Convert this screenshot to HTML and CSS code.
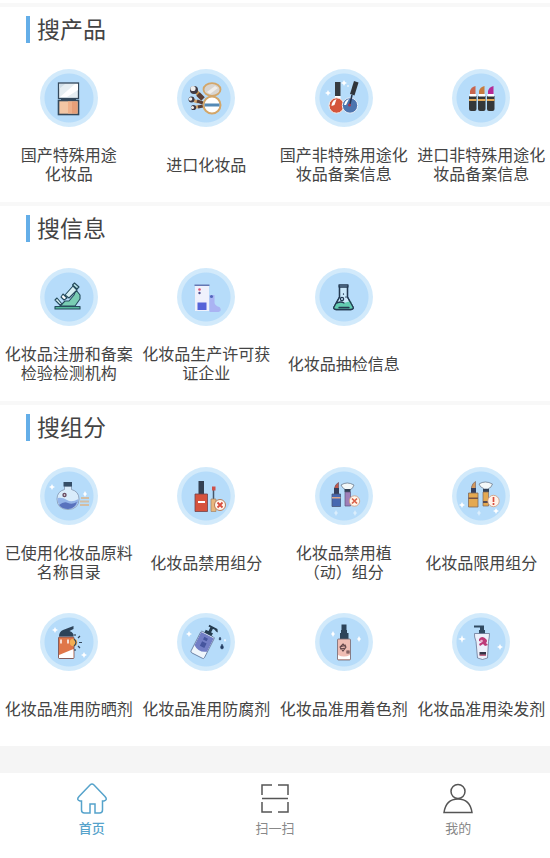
FILE: index.html
```html
<!DOCTYPE html>
<html lang="zh-CN">
<head>
    <meta charset="UTF-8">
    <meta name="viewport" content="width=device-width, initial-scale=1.0">
    <title>化妆品查询</title>
    <link rel="stylesheet" href="styles.css">
</head>

<body>
    <div class="wrap">
        <section class="panel">
            <h2>搜产品</h2>
            <ul>
                <li>
                    <a href="#">
                        <svg class="icon" viewBox="0 0 58 58">
                            <rect x="18.500" y="14" width="20" height="15.500" fill="#e6eef2" stroke="#34495c" stroke-width="1.300"/>
                            <path d="M20 28L35 15h3v6L27 28z" fill="#fff"/>
                            <path d="M19 20l6-5h-6z" fill="#cfdde6"/>
                            <rect x="21" y="29" width="15" height="3" fill="#34495c"/>
                            <rect x="18.500" y="31.500" width="20" height="14" fill="#f2c6a4" stroke="#34495c" stroke-width="1.600"/>
                            <path d="M28 32.500h4v12h-4z" fill="#eeb08a"/>
                            <path d="M32 32.500h5.500v12H32z" fill="#e79f78"/>
                        </svg>
                        <span class="name short">国产特殊用途化妆品</span>
                    </a>
                </li>
                <li>
                    <a href="#">
                        <svg class="icon" viewBox="0 0 58 58">
                            <path d="M18 21l5 6" stroke="#c9944f" stroke-width="4"/>
                            <path d="M21 25l5 5" stroke="#5b4037" stroke-width="5"/>
                            <path d="M15 31l6 2" stroke="#d3a36a" stroke-width="3"/>
                            <path d="M20 32l6 2" stroke="#5b4037" stroke-width="3"/>
                            <path d="M17 38.500l5-1" stroke="#d3a36a" stroke-width="3"/>
                            <path d="M21 38l5-1" stroke="#5b4037" stroke-width="3"/>
                            <circle cx="17" cy="21" r="4" fill="#3e3a44"/>
                            <circle cx="16" cy="19.500" r="2.600" fill="#eee"/>
                            <circle cx="14.500" cy="30.500" r="3" fill="#3e3a44"/>
                            <circle cx="13.500" cy="30" r="1.800" fill="#eee"/>
                            <circle cx="16.500" cy="38.500" r="2.600" fill="#3e3a44"/>
                            <circle cx="15.500" cy="38.500" r="1.500" fill="#eee"/>
                            <ellipse cx="35" cy="20.500" rx="8.500" ry="6.300" fill="#d9d5d0" stroke="#d3a669" stroke-width="1.800"/>
                            <path d="M30 23l8-6 3 2-8 6z" fill="#f0eeeb"/>
                            <circle cx="35" cy="36" r="8.500" fill="#fff" stroke="#d3a669" stroke-width="2"/>
                            <path d="M27.500 34.500h15v3h-15z" fill="#5489b5"/>
                        </svg>
                        <span class="name">进口化妆品</span>
                    </a>
                </li>
                <li>
                    <a href="#">
                        <svg class="icon" viewBox="0 0 58 58">
                            <path d="M20 13h5.500v14H20z" fill="#363b40"/>
                            <path d="M20 27h5.500v3H20z" fill="#fff"/>
                            <ellipse cx="21.500" cy="36.500" rx="7.500" ry="7.700" fill="#d4553c" stroke="#f4efed"/>
                            <path d="M16.500 37q0-5 5-7l-2 6z" fill="#fff"/>
                            <circle cx="35" cy="36.500" r="7.700" fill="#4c74ae" stroke="#e8eff8"/>
                            <path d="M29 36q1-5 5-6l-3 6z" fill="#fff"/>
                            <path d="M39 12l4.500 1.500-4 13-4.500-1.500z" fill="#30353a"/>
                            <path d="M37 26l-2 9" stroke="#26324a" stroke-width="1.500"/>
                            <circle cx="34.500" cy="36" r="1.500" fill="#a6354c"/>
                            <path class="star" d="M29 11l1 2 2 1-2 1-1 2-1-2-2-1 2-1zM13 21l1 2 2 1-2 1-1 2-1-2-2-1 2-1zM33 16l1 1-1 1-1-1z"/>
                        </svg>
                        <span class="name">国产非特殊用途化妆品备案信息</span>
                    </a>
                </li>
                <li>
                    <a href="#">
                        <svg class="icon" viewBox="0 0 58 58">
                            <g id="lipstick">
                                <path d="M17 31h7.500v9q0 2-2 2H19q-2 0-2-2z" fill="#343739"/>
                                <path d="M17 27h7.500v4H17z" fill="#343739"/>
                                <path d="M17 30h7.500v2H17z" fill="#e2a958"/>
                                <path d="M17.500 25h6.500v2.500h-6.500z" fill="#fff"/>
                            </g>
                            <use href="#lipstick" x="9"/>
                            <use href="#lipstick" x="18"/>
                            <path d="M18 25v-3q1-4 5.500-5v8z" fill="#c8654e"/>
                            <path d="M27 25v-3q1-4 5.500-5v8z" fill="#c77b3e"/>
                            <path d="M36 25v-3q1-4 5.500-5v8z" fill="#b52a96"/>
                        </svg>
                        <span class="name">进口非特殊用途化妆品备案信息</span>
                    </a>
                </li>
            </ul>
        </section>

        <section class="panel">
            <h2>搜信息</h2>
            <ul>
                <li>
                    <a href="#">
                        <svg class="icon" viewBox="0 0 58 58" stroke="#254b5c" stroke-width="1.100" stroke-linejoin="round" stroke-linecap="round">
                            <path d="M36 22l4 5v4l-5 7H20l5-5h4l5-6z" fill="#79cdb3"/>
                            <path d="M25 27l8-9 4 4-8 8z" fill="#d6f0f4"/>
                            <path d="M34.500 15l4.500 4-2 2-4.500-4z" fill="#b8e3e6"/>
                            <path d="M23 26l4 4-3 2-3-3z" fill="#fff"/>
                            <path d="M15 32l5 5 2-1-5-6z" fill="#d6f0f4"/>
                            <path d="M15 38.500h25v2.500H15z" fill="#55b79a"/>
                        </svg>
                        <span class="name">化妆品注册和备案检验检测机构</span>
                    </a>
                </li>
                <li>
                    <a href="#">
                        <svg class="icon" viewBox="0 0 58 58">
                            <path d="M18 17h14v26H18z" fill="#eff1fc"/>
                            <path d="M17.500 16.500h15V18h-15z" fill="#6478b4"/>
                            <circle cx="22.500" cy="21.500" r="1.300" fill="#df5374"/>
                            <circle cx="22.500" cy="25" r="1.200" fill="#4b4e91"/>
                            <path d="M20.500 34.500h9v7.500h-9z" fill="#5563d8"/>
                            <path d="M32.500 27h5v8q1 3 5 4 3 4-1 5h-9z" fill="#aab3f3"/>
                            <circle cx="34.500" cy="28.500" r="1.500" fill="#5366bb"/>
                        </svg>
                        <span class="name">化妆品生产许可获证企业</span>
                    </a>
                </li>
                <li>
                    <a href="#">
                        <svg class="icon" viewBox="0 0 58 58" fill="none" stroke="#233952" stroke-width="1.300" stroke-linejoin="round" stroke-linecap="round">
                            <path d="M24.500 19v10L19 39q-1 2 2 2.500h15q3-.5 2-2.500l-5.500-10V19" fill="#cae8fa"/>
                            <path d="M22 35q4-2 7 0 3-1 7-2l2 6q1 2-2 2.500H21q-3-.5-2-2.500z" fill="#62cbb1" stroke="none"/>
                            <path d="M24.500 19v10L19 39q-1 2 2 2.500h15q3-.5 2-2.500l-5.500-10V19M24 17h9v2h-9zM22 35q4-2 7 0M24 39.500h10"/>
                            <circle cx="27" cy="31" r="1.600"/>
                            <path d="M28.500 26v.2M31 29v.2"/>
                        </svg>
                        <span class="name">化妆品抽检信息</span>
                    </a>
                </li>
            </ul>
        </section>

        <section class="panel">
            <h2>搜组分</h2>
            <ul>
                <li>
                    <a href="#">
                        <svg class="icon" viewBox="0 0 58 58">
                            <path d="M24.500 19h7v3.500q7.500 2 7.500 9.500 0 10-11 10.500Q17 42 17 32q0-7.500 7.500-9.500z" fill="#d9ecfb" stroke="#788ba8" stroke-width=".7"/>
                            <path d="M17.500 31q5-1 9.500 2t11.500-1q0 9.500-10.500 10Q17 41 17.500 31z" fill="#94b4e8"/>
                            <path d="M19 38q5-4 9-2t9-1q-2 6.500-9 7-6 0-9-4z" fill="#5972bd"/>
                            <path d="M23.500 15h8.500v4.500h-8.500z" fill="#344e67"/>
                            <circle cx="24.500" cy="28" r="2.200" fill="#684c62"/>
                            <circle cx="24.500" cy="28" r=".8" fill="#fff"/>
                            <path d="M41 31h8M40 34.500h9M40 38h9" stroke="#d2bda3" stroke-width="2"/>
                            <path class="star" d="M12 17l1 2 2 1-2 1-1 2-1-2-2-1 2-1zM45 24l1 2 1 1-1 1-1 2-1-2-1-1 1-1z"/>
                        </svg>
                        <span class="name">已使用化妆品原料名称目录</span>
                    </a>
                </li>
                <li>
                    <a href="#">
                        <svg class="icon" viewBox="0 0 58 58">
                            <path d="M21.500 14h5.500v13h-5.500z" fill="#334053"/>
                            <path d="M18 27h12.500v17.500H18z" fill="#d6523d" stroke="#71434b" stroke-width=".8"/>
                            <path d="M21 34h7v2h-7z" fill="#fff"/>
                            <path d="M36.500 23v9" stroke="#44566b" stroke-width="1.500"/>
                            <path d="M35 19.500h3.500v4H35z" fill="#cd504a"/>
                            <path d="M34 32h5v12.500h-5z" fill="#e8b77d" stroke="#a28365" stroke-width=".7"/>
                            <circle cx="43" cy="38" r="5.500" fill="#fff7ed" stroke="#b77b58"/>
                            <path d="M40.500 35.500l5 5m0-5l-5 5" stroke="#d84d3f" stroke-width="1.800"/>
                        </svg>
                        <span class="name">化妆品禁用组分</span>
                    </a>
                </li>
                <li>
                    <a href="#">
                        <svg class="icon" viewBox="0 0 58 58">
                            <path d="M19.500 21q1-4 4-5.500V23h-4z" fill="#c3594b" stroke="#74515f" stroke-width=".7"/>
                            <path d="M19 21h5v6h-5z" fill="#343f5d"/>
                            <path d="M17 27h8.500v12.500H17z" fill="#4668b1" stroke="#475679" stroke-width=".8"/>
                            <path d="M17 30h8.500v1.500H17z" fill="#dca78c"/>
                            <path d="M26 18q6-4 13 0-1 4-4.500 5h-3.500q-4-2-5-5z" fill="#f3f8f9" stroke="#627083" stroke-width=".7"/>
                            <path d="M29.500 22h6v3h-6z" fill="#334257"/>
                            <path d="M30 25h5.500v14H30z" fill="#9f7eb8" stroke="#60577d" stroke-width=".7"/>
                            <circle cx="39.500" cy="34" r="5.200" fill="#fff7ed" stroke="#d19a7c" stroke-width=".8"/>
                            <path d="M37 31.500l5 5m0-5l-5 5" stroke="#d96149" stroke-width="1.700"/>
                            <path class="star faint" d="M21 43l1 2 1 1-1 1-1 2-1-2-1-1 1-1zM40 43l1 2 1 1-1 1-1 2-1-2-1-1 1-1z"/>
                        </svg>
                        <span class="name short">化妆品禁用植（动）组分</span>
                    </a>
                </li>
                <li>
                    <a href="#">
                        <svg class="icon" viewBox="0 0 58 58">
                            <path d="M19.500 20q1-4 4-5.500V23h-4z" fill="#d4985d" stroke="#806a62" stroke-width=".7"/>
                            <path d="M19 21h5v5h-5z" fill="#343f5d"/>
                            <path d="M16.500 26h9.500v14h-9.500z" fill="#e5a950" stroke="#80695c" stroke-width=".8"/>
                            <path d="M16.500 30.500H26V32h-9.500z" fill="#765245"/>
                            <path d="M27 17q6-4 13.500 0-1 4-5 5h-3q-5-2-5.500-5z" fill="#f3f8f9" stroke="#627083" stroke-width=".7"/>
                            <path d="M31 22h6v3h-6z" fill="#334257"/>
                            <path d="M31 25h5.500v14H31z" fill="#e5a950" stroke="#80695c" stroke-width=".7"/>
                            <path d="M31 34h5v2h-5z" fill="#584b50"/>
                            <circle cx="41.500" cy="34" r="5.700" fill="#fff3e9" stroke="#d19a7c" stroke-width=".8"/>
                            <path d="M41.500 30v5m0 1v2" stroke="#d84d3f" stroke-width="1.700"/>
                            <path class="star" d="M10 35l1 2 2 1-2 1-1 2-1-2-2-1 2-1zM44 41l1 2 2 1-2 1-1 2-1-2-2-1 2-1z"/>
                            <path class="star faint" d="M27 43l1 2 1 1-1 1-1 2-1-2-1-1 1-1z"/>
                        </svg>
                        <span class="name">化妆品限用组分</span>
                    </a>
                </li>
                <li>
                    <a href="#">
                        <svg class="icon" viewBox="0 0 58 58">
                            <path d="M19 23.500q0-5 4-6.500l10.500-4v3l-4 2q5 2 4 5.500z" fill="#2d4359"/>
                            <rect x="18.500" y="24" width="15.500" height="21.500" rx="1" fill="#df7649" stroke="#714b4e" stroke-width=".8"/>
                            <path d="M19 42l14.500-6v9H19z" fill="#fff"/>
                            <path d="M21 26.500v4M28 26.500v4" stroke="#fff" stroke-width="1.500"/>
                            <circle cx="33.500" cy="29.500" r="3.700" fill="#f2ae53"/>
                            <path d="M34 26q4 3.500 0 7M38 25l2-2M39 29.500h3M38 33l2 2M35 23v-2M35 36v2" fill="none" stroke="#34475b" stroke-width="1.200"/>
                            <path class="star" d="M15 14l1 2 2 1-2 1-1 2-1-2-2-1 2-1zM44 39l1 2 2 1-2 1-1 2-1-2-2-1 2-1z"/>
                        </svg>
                        <span class="name">化妆品准用防晒剂</span>
                    </a>
                </li>
                <li>
                    <a href="#">
                        <svg class="icon" viewBox="0 0 58 58">
                            <g transform="rotate(27 26 31)">
                                <rect x="18.500" y="20" width="15" height="24" rx="1.500" fill="#eff6fc" stroke="#53698f" stroke-width=".7"/>
                                <path d="M19 21h14v15q-7 5-14 0z" fill="#727ec5"/>
                                <path d="M24 24h4v3h-4zm0 5h5v5h-5z" fill="#45559e"/>
                                <path d="M22 17h8v3h-8zM25 13h3v5h-3zM23 11h9l2 3h-2l-2-1h-7z" fill="#263c50"/>
                            </g>
                            <path d="M43 24l1 2q0 1-1 1t-1-1zM45 31l1.500 3q0 2-1.500 2t-1.500-2z" fill="#263f63" stroke="#263f63" stroke-width=".5"/>
                            <path class="star" d="M12 18l1 2 2 1-2 1-1 2-1-2-2-1 2-1zM48 26l1 1-1 2-1-2z"/>
                        </svg>
                        <span class="name">化妆品准用防腐剂</span>
                    </a>
                </li>
                <li>
                    <a href="#">
                        <svg class="icon" viewBox="0 0 58 58">
                            <path d="M26.500 11.500h5V17h-5zM26 17h6v4h-6zM25 20h8.500v6H25z" fill="#2d4359"/>
                            <rect x="22.500" y="26" width="13" height="21" rx="1" fill="#efbdb4" stroke="#736770" stroke-width=".8"/>
                            <path d="M23 42q6 3 12 0v4H23z" fill="#fff"/>
                            <path d="M28 31l3 3-3 4-3-4zM25 34l6-2M31 35l-6 1M32 38h2v2h-2z" fill="none" stroke="#684a4d" stroke-width="1.100"/>
                            <path class="star" d="M18 18l1 2 1 1-1 1-1 2-1-2-1-1 1-1zM44 23l1 2 1 1-1 1-1 2-1-2-1-1 1-1z"/>
                        </svg>
                        <span class="name">化妆品准用着色剂</span>
                    </a>
                </li>
                <li>
                    <a href="#">
                        <svg class="icon" viewBox="0 0 58 58">
                            <path d="M22 12.500h10V18h-4v-3.500h-6zM27 17h6v4h-6z" fill="#304a62"/>
                            <path d="M22.500 20.500h15q0 3-1 8l-1 16.500q-5 3-10 0L24 28.500q-2-5-1.500-8z" fill="#edf0fb" stroke="#687795" stroke-width=".8"/>
                            <path d="M27 26q3-4 7 0 2 2 0 4l2 2-3 1-2-2-3 2-1-2 3-2-3-1z" fill="#bd3a78"/>
                            <circle cx="29.500" cy="28" r="1.300" fill="#edb3cf"/>
                            <path d="M27.500 39H34v3h-6.500z" fill="#343346"/>
                            <path d="M27.500 41.500H34V43h-6.500z" fill="#c26b88"/>
                            <path class="star" d="M10 22l1 3 3 1-3 1-1 3-1-3-3-1 3-1zM48 31l1 2 2 1-2 1-1 2-1-2-2-1 2-1z"/>
                        </svg>
                        <span class="name">化妆品准用染发剂</span>
                    </a>
                </li>
            </ul>
        </section>
    </div>

    <nav class="tabbar">
        <a class="active" href="#">
            <svg viewBox="0 0 32 32">
                <path d="M5.500 19H4q-4-1-1-4.500L14 3q2-2 4 0l11 11.500q3 3.500-1 4.500h-1.500v9q0 3-3 3H19v-9h-5v9H8.500q-3 0-3-3z"/>
            </svg>
            <span>首页</span>
        </a>
        <a href="#">
            <svg viewBox="0 0 32 32">
                <path d="M3 13V3h10M19 3h10v10M3 20v10h10M19 30h10V20M3 16.500h26"/>
            </svg>
            <span>扫一扫</span>
        </a>
        <a href="#">
            <svg viewBox="0 0 32 32">
                <circle cx="16" cy="9.500" r="7"/>
                <path d="M2 30.500Q4 17 16 17t14 13.500z"/>
            </svg>
            <span>我的</span>
        </a>
    </nav>
</body>

</html>
```
FILE: styles.css
```css
body {
    margin: 0;
    min-height: 100vh;
    display: flex;
    flex-direction: column;
    background-color: #fff;
    color: #444;
    font-family: "Noto Sans CJK SC", sans-serif;
    text-spacing-trim: space-all;
}

ul {
    margin: 0;
    padding: 0;
    list-style: none;
}

a {
    color: inherit;
    text-decoration: none;
}

.wrap {
    padding-top: 3px;
    border-bottom: 27px solid #f5f5f5;
}

.panel {
    padding: 9px 0 19px;
    border-top: 4px solid #f8f8f8;
}

.panel h2 {
    margin: 0 0 26px 26px;
    padding: 0 0 2px 7px;
    border-left: 4px solid #64aee8;
    font-size: 23px;
    font-weight: normal;
    line-height: 25px;
}

.panel ul {
    display: grid;
    grid-template-columns: repeat(4, 1fr);
    row-gap: 32px;
}

.panel li a {
    display: flex;
    flex-direction: column;
    align-items: center;
}

.icon {
    width: 58px;
    height: 58px;
    border-radius: 50%;
    background: radial-gradient(circle, #b6dcfa 24px, #d2eafb 25px);
}

.icon .star {
    fill: #fff;
}

.icon .faint {
    opacity: .5;
}

.name {
    height: 38px;
    margin-top: 18px;
    display: flex;
    align-items: center;
    font-size: 16px;
    line-height: 19px;
    text-align: center;
}

.name.short {
    max-width: 6em;
}

.tabbar {
    padding: 9px 0;
    display: flex;
}

.tabbar a {
    flex: 1;
    display: flex;
    flex-direction: column;
    align-items: center;
    color: #888;
    font-size: 13px;
    line-height: 20px;
}

.tabbar svg {
    width: 32px;
    height: 32px;
    margin-bottom: 4px;
    fill: none;
    stroke: #555;
    stroke-width: 1.5px;
}

.tabbar .active {
    color: #56a3cb;
    font-weight: 500;
}

.tabbar .active svg {
    stroke: #56a3cb;
}
```
